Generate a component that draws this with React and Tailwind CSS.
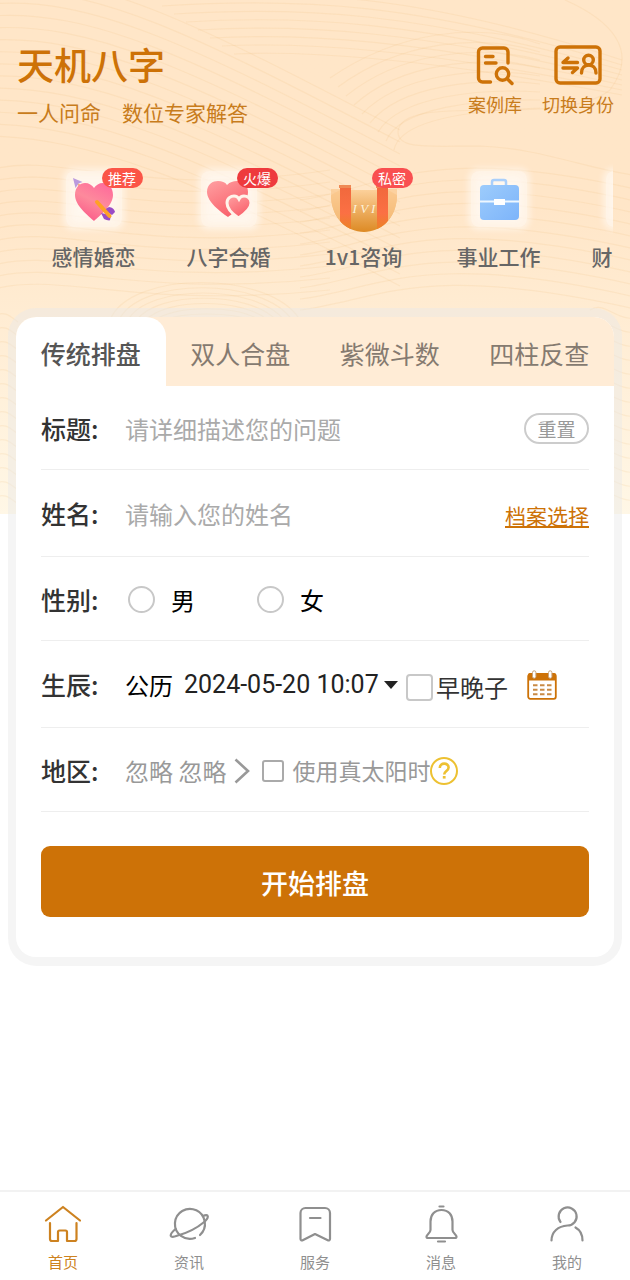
import React, { useState } from "react";

function range(n) {
  return Array.from({ length: n }, (_, i) => i);
}

/* Faint wave lines drawn over the top gradient */
function Waves() {
  return (
    <svg
      className="h-full w-full"
      viewBox="0 0 630 514"
      preserveAspectRatio="xMidYMin slice"
      fill="none"
      stroke="#e9b870"
      strokeOpacity="0.14"
      strokeWidth="1.2"
      aria-hidden="true"
    >
      {range(14).map((i) => (
        <path key={"a" + i} d={`M-10 ${-20 + i * 12}C90 ${-30 + i * 13} 190 ${20 + i * 12} 400 ${130 + i * 12}`} />
      ))}
      {range(8).map((i) => (
        <path key={"b" + i} d={`M${150 + i * 12} ${-2 + i * 8}C300 ${-12 + i * 9} 420 ${-6 + i * 9} 622 ${60 + i * 5}`} />
      ))}
      {range(9).map((i) => (
        <path key={"c" + i} d={`M${330 + i * 8} ${78 + i * 9}C400 ${30 + i * 11} 480 ${22 + i * 11} 540 ${44 + i * 8}`} />
      ))}
      <path d="M565 0C610 20 640 50 610 90C560 130 400 90 398 132C398 150 430 146 480 146C540 148 590 170 640 176" />
      {range(11).map((i) => (
        <path key={"d" + i} d={`M-10 ${170 + i * 12}C60 ${150 + i * 12} 130 ${200 + i * 11} 330 ${170 + i * 12}`} />
      ))}
      {range(11).map((i) => (
        <path key={"e" + i} d={`M300 ${200 + i * 11}C380 ${190 + i * 11} 420 ${140 + i * 12} 640 ${190 + i * 12}`} />
      ))}
      {range(8).map((i) => (
        <path key={"f" + i} d={`M${110 + i * 9} 320C${130 + i * 9} ${270 + i * 7} ${270 - i * 7} ${270 + i * 7} ${300 - i * 8} 320`} />
      ))}
      {range(14).map((i) => (
        <path key={"g" + i} d={`M590 ${310 + i * 14}C605 ${300 + i * 14} 615 ${322 + i * 14} 640 ${318 + i * 14}`} />
      ))}
      {range(14).map((i) => (
        <path key={"h" + i} d={`M-5 ${316 + i * 14}C4 ${310 + i * 14} 10 ${316 + i * 14} 18 ${322 + i * 14}`} />
      ))}
    </svg>
  );
}

function CaseIcon() {
  return (
    <svg width="40" height="42" viewBox="0 0 40 42" fill="none" stroke="#cd7207" strokeWidth="3.4" strokeLinecap="round" strokeLinejoin="round" aria-hidden="true">
      <path d="M15.500 38H7.500a4 4 0 0 1-4-4V8a4 4 0 0 1 4-4H29a4 4 0 0 1 4 4v11" />
      <path d="M10.500 12.500h7.500M10.500 19h10.500" />
      <circle cx="27.500" cy="30" r="6.200" />
      <path d="M32.500 35l4.500 4.500" />
    </svg>
  );
}

function SwitchIcon() {
  return (
    <svg width="48" height="42" viewBox="0 0 48 42" fill="none" stroke="#cd7207" strokeWidth="3.400" strokeLinecap="round" strokeLinejoin="round" aria-hidden="true">
      <rect x="2" y="3" width="44" height="36" rx="4" />
      <path d="M23.500 18.500H9l5-4.500M9 24h14.500L18.500 28.500" />
      <circle cx="34.500" cy="16" r="4.800" />
      <path d="M27.500 29c0-10.500 14.500-10.500 14.500 0" />
    </svg>
  );
}

const HEART = "M28 47C23 42 9 32 9 21C9 13 14 9 19 9C23 9 26 11 28 14C30 11 33 9 37 9C42 9 47 13 47 21C47 32 33 42 28 47Z";

function ArrowHeart() {
  return (
    <svg width="56" height="56" viewBox="0 0 56 56" aria-hidden="true">
      <defs>
        <linearGradient id="heartA" x1="0.800" y1="0" x2="0.300" y2="1">
          <stop offset="0" stopColor="#ff6a9b" />
          <stop offset="0.500" stopColor="#fd8a9c" />
          <stop offset="1" stopColor="#fb5a88" />
        </linearGradient>
      </defs>
      <path d="M12 13l7 7" stroke="#f5b07a" strokeWidth="2" />
      <path d="M7 7l9.500 4-4 1.500-3 4.500z" fill="#bb9add" />
      <path d={HEART} transform="translate(0 3)" fill="url(#heartA)" />
      <path d="M38 39l5-3c3 0 6 3 6 5l-3 3zM35 42l3 6c2 1 6 2 6 1l1-5z" fill="#9a4cc6" />
      <path d="M31 31l12.500 14" stroke="#ffa126" strokeWidth="4" strokeLinecap="round" />
    </svg>
  );
}

function TwinHearts() {
  return (
    <svg width="56" height="56" viewBox="0 0 56 56" aria-hidden="true">
      <defs>
        <linearGradient id="heartB" x1="0" y1="0" x2="0.600" y2="1">
          <stop offset="0" stopColor="#ffa0a2" />
          <stop offset="1" stopColor="#f95f69" />
        </linearGradient>
      </defs>
      <g transform="translate(0 2)">
        <path d="M27 44C20 39 6 29 6 19C6 11 12 8 17 8C21 8 24 9 26 12C29 9 32 8 36 8C42 8 47 12 47 19C47 30 34 39 27 44Z" fill="url(#heartB)" />
        <path d="M37.500 45C33 42 26 36 26 30C26 25 30 23 33 23C35 23 37 24 38 26C39 24 41 23 43 23C46 23 50 25 50 30C50 36 42 42 37.500 45Z" fill="url(#heartB)" stroke="#fff4ea" strokeWidth="3" />
      </g>
    </svg>
  );
}

function ConsultIcon() {
  return (
    <svg width="66" height="61" viewBox="0 0 66 61" aria-hidden="true">
      <defs>
        <linearGradient id="disc" x1="0" y1="0" x2="0" y2="1">
          <stop offset="0" stopColor="#fcd09a" />
          <stop offset="1" stopColor="#dd8a24" />
        </linearGradient>
        <linearGradient id="pillar" x1="0" y1="0" x2="0" y2="1">
          <stop offset="0" stopColor="#f0683c" />
          <stop offset="0.600" stopColor="#fb7044" />
          <stop offset="1" stopColor="#e8861f" />
        </linearGradient>
        <clipPath id="bowl">
          <path d="M0 18V0H66V18C68 45 52 61 33 61S-2 45 0 18Z" />
        </clipPath>
      </defs>
      <g clipPath="url(#bowl)">
        <path d="M0 24L9 19H57L66 24V61H0z" fill="url(#disc)" />
        <path d="M0 18h10v43H0zM56 18h10v43H56z" fill="#fbc88d" fillOpacity="0.700" />
        <rect x="9" y="14" width="11" height="47" fill="url(#pillar)" />
        <rect x="46" y="14" width="11" height="47" fill="url(#pillar)" />
        <path d="M8 14h12v3H8zM45 14h12v3H45z" fill="#ef8a55" />
      </g>
      <text x="33" y="42" textAnchor="middle" fontSize="13" fontStyle="italic" fontFamily="Liberation Serif, serif" fill="#fdf0d8">I V I</text>
    </svg>
  );
}

function Briefcase() {
  return (
    <svg width="56" height="56" viewBox="0 0 56 56" aria-hidden="true">
      <defs>
        <linearGradient id="bag" x1="0" y1="0" x2="1" y2="1">
          <stop offset="0" stopColor="#9dccfc" />
          <stop offset="1" stopColor="#7db4fa" />
        </linearGradient>
      </defs>
      <path d="M21 14v-3a2 2 0 0 1 2-2h10a2 2 0 0 1 2 2v3" fill="none" stroke="#a9cffb" strokeWidth="2.500" />
      <rect x="9" y="14" width="39" height="35" rx="4" fill="url(#bag)" />
      <path d="M9 30.500h39" stroke="#eef7ff" strokeWidth="2" />
      <rect x="23" y="28" width="11" height="6" fill="#fff" />
    </svg>
  );
}

function CoinIcon() {
  return (
    <svg width="56" height="56" viewBox="0 0 56 56" aria-hidden="true">
      <circle cx="28" cy="28" r="20" fill="#d9a02c" />
      <circle cx="28" cy="28" r="14" fill="#f7cf62" />
    </svg>
  );
}

const services = [
  { name: "感情婚恋", badge: "推荐", color: "bg-[#fb5547]", Icon: ArrowHeart },
  { name: "八字合婚", badge: "火爆", color: "bg-[#ee3a3d]", Icon: TwinHearts },
  { name: "1v1咨询", badge: "私密", color: "bg-[#f94f50]", Icon: ConsultIcon, bare: true },
  { name: "事业工作", Icon: Briefcase },
  { name: "财运分析", Icon: CoinIcon },
];

function Service({ name, badge, color, Icon, bare }) {
  return (
    <li className="w-[135px] shrink-0">
      <a href="#service" className="flex flex-col items-center">
        <span className="relative flex h-14 w-14 justify-center">
          {bare ? (
            <span className="flex w-[66px] shrink-0"><Icon /></span>
          ) : (
            <span className="h-14 w-14 rounded-lg bg-white/70 shadow-[0_0_6px_3px_rgba(255,255,255,0.5),inset_0_0_8px_4px_rgba(255,238,218,0.5)]"><Icon /></span>
          )}
          {badge && (
            <span className={`absolute -top-[3px] left-9 flex h-5 w-[41px] items-center justify-center rounded-full text-[14px] leading-5 text-white ${color}`}>
              {badge}
            </span>
          )}
        </span>
        <span className="mt-[13px] text-[21px] leading-8 font-medium whitespace-nowrap text-[#666]">{name}</span>
      </a>
    </li>
  );
}

const tabs = ["传统排盘", "双人合盘", "紫微斗数", "四柱反查"];

function Row({ label, htmlFor, tall, children }) {
  return (
    <div className={`flex items-center border-b border-[#eee] pt-[2px] text-[24px] ${tall ? "h-[87px]" : "h-[84px]"}`}>
      <label htmlFor={htmlFor} className="w-[84px] shrink-0 text-[25px] font-medium text-[#333]">
        {label}:
      </label>
      {children}
    </div>
  );
}

function CalendarIcon() {
  return (
    <svg width="30" height="30" viewBox="0 0 30 30" aria-hidden="true">
      <rect x="1.200" y="4.200" width="27.600" height="24.600" rx="2" fill="#fff" stroke="#cd7207" strokeWidth="1.800" />
      <path d="M1 10.500V5a2 2 0 0 1 2-2h24a2 2 0 0 1 2 2v5.500z" fill="#cd7207" />
      <rect x="5.500" y="0.800" width="3.400" height="7.500" rx="1.700" fill="#fff" stroke="#c9a27a" strokeWidth="1" />
      <rect x="21.500" y="0.800" width="3.400" height="7.500" rx="1.700" fill="#fff" stroke="#c9a27a" strokeWidth="1" />
      <path d="M6 15.300h4.500M13 15.300h4.500M20 15.300h4.500M6 19.800h4.500M13 19.800h4.500M20 19.800h4.500M6 24.300h4.500M13 24.300h4.500M20 24.300h4.500" stroke="#c98a45" strokeWidth="2" />
    </svg>
  );
}

function NavIcon({ children }) {
  return (
    <svg width="40" height="40" viewBox="0 0 40 40" fill="none" stroke="currentColor" strokeWidth="2.200" strokeLinecap="round" strokeLinejoin="round" aria-hidden="true">
      {children}
    </svg>
  );
}

const navItems = [
  {
    name: "首页",
    art: (
      <>
        <path d="M3 16.500L20 3l17 13.500" />
        <path d="M7 19v16a2 2 0 0 0 2 2h6v-9a1.500 1.500 0 0 1 1.500-1.500h6a1.500 1.500 0 0 1 1.500 1.500v9h7.500a2 2 0 0 0 2-2V19" />
      </>
    ),
  },
  {
    name: "资讯",
    art: (
      <>
        <path d="M26 34A15 15 0 1 1 31 31" />
        <path d="M6.500 25C-1 31.500 1 34.500 8 31.800C18 29 28 24 34.500 18.500C41 13 39.500 9.500 34 12" />
      </>
    ),
  },
  {
    name: "服务",
    art: (
      <>
        <path d="M5.500 9a5 5 0 0 1 5-5H30a5 5 0 0 1 5 5v26a1.500 1.500 0 0 1-2.200 1.300L20 30 7.700 36.300a1.500 1.500 0 0 1-2.200-1.300z" />
        <path d="M15 14h10.500" />
      </>
    ),
  },
  {
    name: "消息",
    art: (
      <>
        <path d="M18.500 2.500h4M17 37.500h7" />
        <path d="M20.500 6C13.500 6 9.500 11 9.500 17.500V26c0 3-4 5-4 6.500 0 1 .5 1.500 1.500 1.500h27c1 0 1.500-.5 1.500-1.500 0-1.500-4-3.500-4-6.500v-8.500C31.500 11 27.500 6 20.500 6z" />
      </>
    ),
  },
  {
    name: "我的",
    art: (
      <>
        <path d="M13.500 18A9 9 0 1 1 20.500 21.500C11 22 4.500 28 4.500 36.500" />
        <path d="M28.500 23.500C33 26 35.500 30.500 35.500 36.500" />
      </>
    ),
  },
];

export default function App() {
  const [active, setActive] = useState(0);
  return (
    <div className="relative isolate flex min-h-screen flex-col bg-white font-['Noto_Sans_CJK_SC',sans-serif]">
      <div className="absolute inset-x-0 top-0 -z-10 h-[514px] bg-linear-to-b from-[#ffe6c8] from-40% to-[#fff7e6]">
        <Waves />
      </div>

      <header className="flex items-start justify-between pt-10 pr-4 pl-[17px]">
        <div>
          <h1 className="text-[37px] leading-[48px] font-medium text-[#cd7207]">天机八字</h1>
          <p className="mt-2 text-[21px] leading-8 text-[#c87c1c]">一人问命　数位专家解答</p>
        </div>
        <div className="flex gap-5 pt-1 text-[18px] leading-6 text-[#c87c1c]">
          <button type="button" className="flex flex-col items-center gap-[6px]">
            <CaseIcon />
            案例库
          </button>
          <button type="button" className="flex flex-col items-center gap-[6px]">
            <SwitchIcon />
            切换身份
          </button>
        </div>
      </header>

      <ul className="mr-[17px] mt-[31px] flex overflow-hidden pt-3 pb-9 pl-[26px]">
        {services.map((s) => (
          <Service key={s.name} {...s} />
        ))}
      </ul>

      <main className="flex-1">
        <div className="mx-2 rounded-[28px] bg-[#e8e8e8]/45 px-2 py-[9px]">
          <div className="overflow-hidden rounded-[20px] bg-white">
            <div role="tablist" className="grid grid-cols-4 bg-[#ffecd6]">
              {tabs.map((t, i) => (
                <button
                  key={t}
                  type="button"
                  role="tab"
                  aria-selected={i === active}
                  onClick={() => setActive(i)}
                  className={
                    i === active
                      ? "h-[69px] rounded-t-[20px] bg-white pt-1 text-[25px] font-medium text-[#555]"
                      : "h-[69px] pt-1 text-[25px] text-[#857a70]"
                  }
                >
                  {t}
                </button>
              ))}
            </div>

            <form className="px-[25px] pb-10" onSubmit={(e) => e.preventDefault()}>
              <Row label="标题" htmlFor="title">
                <input id="title" type="text" placeholder="请详细描述您的问题" className="min-w-0 flex-1 placeholder:text-[#aaa] placeholder:opacity-100 focus:outline-none" />
                <button type="reset" className="h-[31px] w-[65px] rounded-full border-2 border-[#ccc] text-[19px] leading-[27px] text-[#999]">
                  重置
                </button>
              </Row>
              <Row label="姓名" htmlFor="name" tall>
                <input id="name" type="text" placeholder="请输入您的姓名" className="min-w-0 flex-1 placeholder:text-[#aaa] placeholder:opacity-100 focus:outline-none" />
                <a href="#archive" className="pt-1 text-[21px] text-[#cd7207] underline">档案选择</a>
              </Row>
              <Row label="性别" htmlFor="male">
                <div className="flex gap-[62px] pl-[3px] text-black">
                  <label className="flex items-center gap-4">
                    <input id="male" type="radio" name="gender" className="h-[27px] w-[27px] appearance-none rounded-full border-2 border-[#c8c8c8] bg-white checked:border-8 checked:border-[#cd7207]" />
                    男
                  </label>
                  <label className="flex items-center gap-4">
                    <input type="radio" name="gender" className="h-[27px] w-[27px] appearance-none rounded-full border-2 border-[#c8c8c8] bg-white checked:border-8 checked:border-[#cd7207]" />
                    女
                  </label>
                </div>
              </Row>
              <Row label="生辰" htmlFor="birth" tall>
                <span className="text-black">公历</span>
                <select id="birth" className="ml-[11px] appearance-none bg-transparent font-[Roboto,sans-serif] text-[25px] text-[#222] focus:outline-none">
                  <option>2024-05-20 10:07</option>
                </select>
                <svg className="ml-[5px] shrink-0" width="14" height="8" viewBox="0 0 14 8" fill="#222" aria-hidden="true">
                  <path d="M0 0h14L7 8z" />
                </svg>
                <label className="ml-2 flex items-center gap-[3px] pt-1 text-[#333]">
                  <input type="checkbox" className="h-[27px] w-[27px] appearance-none rounded-[4px] border-2 border-[#c8c8c8] bg-white checked:bg-[#cd7207]" />
                  早晚子
                </label>
                <button type="button" aria-label="日历" className="ml-[19px] shrink-0">
                  <CalendarIcon />
                </button>
              </Row>
              <Row label="地区" htmlFor="region">
                <button id="region" type="button" className="flex items-center gap-2 text-[#999]">
                  忽略 忽略
                  <svg width="16" height="26" viewBox="0 0 16 26" fill="none" stroke="#999" strokeWidth="2.600" aria-hidden="true">
                    <path d="M1.500 1.500L14 13 1.500 24.500" />
                  </svg>
                </button>
                <label className="ml-3 flex items-center gap-2 text-[23px] text-[#999]">
                  <input type="checkbox" className="h-[22px] w-[22px] appearance-none rounded-[3px] border-2 border-[#aaa] bg-white checked:bg-[#cd7207]" />
                  使用真太阳时
                </label>
                <button type="button" aria-label="说明" className="shrink-0">
                  <svg width="28" height="28" viewBox="0 0 28 28" fill="none" stroke="#edc132" aria-hidden="true">
                    <circle cx="14" cy="14" r="13" strokeWidth="2" />
                    <path d="M9.800 11c0-5.800 8.800-5.600 8.800-.5 0 3.500-4.400 3.500-4.400 7" strokeWidth="2.600" />
                    <path d="M14.200 19v2.600" strokeWidth="2.800" />
                  </svg>
                </button>
              </Row>
              <button type="submit" className="mt-[34px] h-[71px] w-full rounded-[9px] bg-[#cd7207] pt-1 text-[27px] font-medium text-white">
                开始排盘
              </button>
            </form>
          </div>
        </div>
      </main>

      <nav className="grid grid-cols-5 border-t-2 border-[#f2f2f2] bg-white pt-3 pb-[6px] text-[15px] leading-6">
        {navItems.map((n, i) => (
          <a key={n.name} href="#nav" className={i === 0 ? "flex flex-col items-center gap-[6px] text-[#cd8220]" : "flex flex-col items-center gap-[6px] text-[#8f8f8f]"}>
            <NavIcon>{n.art}</NavIcon>
            {n.name}
          </a>
        ))}
      </nav>
    </div>
  );
}
